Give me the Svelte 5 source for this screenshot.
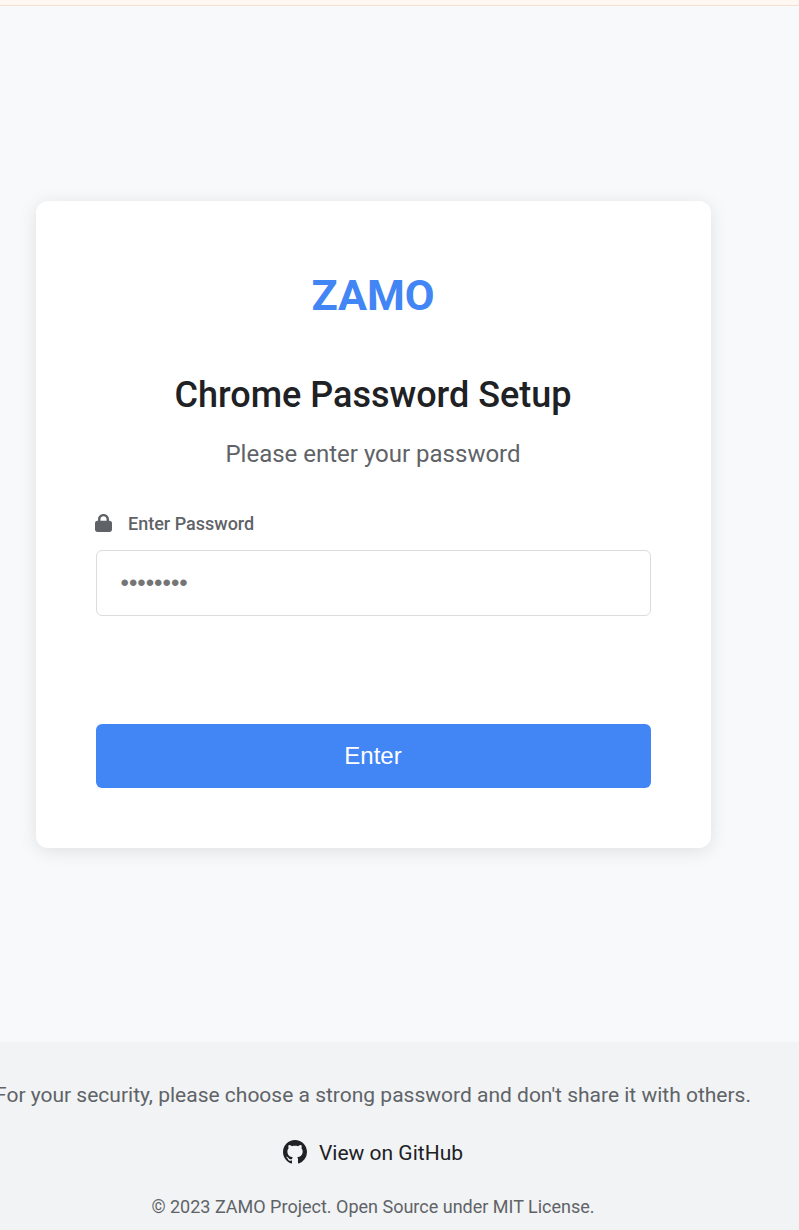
<script>
  let password = '';
</script>

<div class="page">
  <div class="notice"></div>
  <main>
    <section class="card">
      <div class="brand">ZAMO</div>
      <h1>Chrome Password Setup</h1>
      <p class="sub">Please enter your password</p>
      <label for="pw">
        <svg width="17" height="18" viewBox="0 0 448 512" preserveAspectRatio="none"><path fill="#5f6368" d="M144 144v48H304V144c0-44.200-35.800-80-80-80s-80 35.800-80 80zM80 192V144C80 64.500 144.500 0 224 0s144 64.500 144 144v48h16c35.300 0 64 28.700 64 64V448c0 35.300-28.700 64-64 64H64c-35.300 0-64-28.700-64-64V256c0-35.300 28.700-64 64-64H80z" /></svg>
        <span>Enter Password</span>
      </label>
      <input id="pw" type="password" placeholder="••••••••" bind:value={password} />
      <button>Enter</button>
    </section>
  </main>
  <footer>
    <p class="security">For your security, please choose a strong password and don't share it with others.</p>
    <a href="#github">
      <svg width="24" height="24" viewBox="0 0 16 16"><path fill="#202124" d="M8 0C3.580 0 0 3.580 0 8c0 3.540 2.290 6.530 5.470 7.590.4.070.55-.17.55-.38 0-.19-.01-.82-.01-1.490-2.010.37-2.530-.49-2.690-.94-.09-.23-.48-.94-.82-1.130-.28-.15-.68-.52-.01-.53.63-.01 1.080.58 1.230.82.72 1.210 1.870.87 2.330.66.07-.52.28-.87.51-1.070-1.780-.2-3.640-.89-3.640-3.950 0-.87.31-1.590.82-2.150-.08-.2-.36-1.020.08-2.120 0 0 .67-.21 2.200.82.64-.18 1.320-.27 2-.27s1.360.09 2 .27c1.530-1.040 2.200-.82 2.200-.82.44 1.100.16 1.920.08 2.120.51.56.82 1.270.82 2.150 0 3.070-1.870 3.750-3.650 3.950.29.25.54.73.54 1.480 0 1.070-.01 1.930-.01 2.200 0 .21.15.46.55.38A8.010 8.010 0 0 0 16 8c0-4.420-3.580-8-8-8z" /></svg>
      <span>View on GitHub</span>
    </a>
    <p class="copy">© 2023 ZAMO Project. Open Source under MIT License.</p>
  </footer>
</div>

<style>
  .page {
    width: 799px;
    height: 1230px;
    overflow: hidden;
    display: flex;
    flex-direction: column;
    background: #f8f9fb;
    font-family: Roboto, sans-serif;
    color: #202124;
  }
  * { box-sizing: border-box; }
  .notice { height: 6px; flex: none; background: #fff7f2; border-bottom: 1px solid #f7dfd6; }
  main { height: 1036px; flex: none; padding: 195px 0 0 36px; }
  .card {
    width: 675px;
    height: 647px;
    padding: 60px;
    display: flex;
    flex-direction: column;
    background: #fff;
    border-radius: 12px;
    box-shadow: 0 3px 18px rgba(0, 0, 0, 0.1);
  }
  .brand, h1, .sub { padding-right: 1px; text-align: center; }
  .brand { margin-top: 9px; font-size: 43.2px; font-weight: 700; line-height: 52px; color: #4285f4; }
  h1 { margin: 50px 0 0; font-size: 36px; font-weight: 500; line-height: 46px; }
  .sub { margin: 19px 0 0; font-size: 24px; line-height: 34px; color: #5f6368; }
  label { margin: 40px 0 0 -1px; display: flex; align-items: center; gap: 16px; height: 24px; font-size: 18px; font-weight: 500; color: #5f6368; }
  label svg { display: block; margin-bottom: 1px; }
  input {
    width: 100%;
    height: 66px;
    margin: 15px 0 0;
    padding: 0 23.500px;
    border: 1px solid #dadce0;
    border-radius: 6px;
    background: #fff;
    font: 24px "Liberation Sans", Arial, sans-serif;
    color: #202124;
  }
  input::placeholder { color: #757575; opacity: 1; }
  button {
    height: 64px;
    margin: 108px 0 0;
    padding: 0 1px 0 0;
    border: 0;
    border-radius: 6px;
    background: #4285f4;
    color: #fff;
    font: 24px "Liberation Sans", Arial, sans-serif;
  }
  footer { height: 188px; flex: none; width: 746px; display: flex; flex-direction: column; align-items: center; padding-top: 38px; color: #5f6368; box-shadow: 53px 0 0 #f1f3f4; background: #f1f3f4; }
  footer p { margin: 0; white-space: nowrap; }
  .security { font-size: 21px; line-height: 30px; }
  a { margin-top: 27px; height: 32px; display: flex; align-items: center; gap: 12px; font-size: 21px; color: #202124; text-decoration: none; }
  a svg { display: block; margin-bottom: 2px; }
  .copy { margin-top: 26px; font-size: 18px; line-height: 24px; }
</style>
